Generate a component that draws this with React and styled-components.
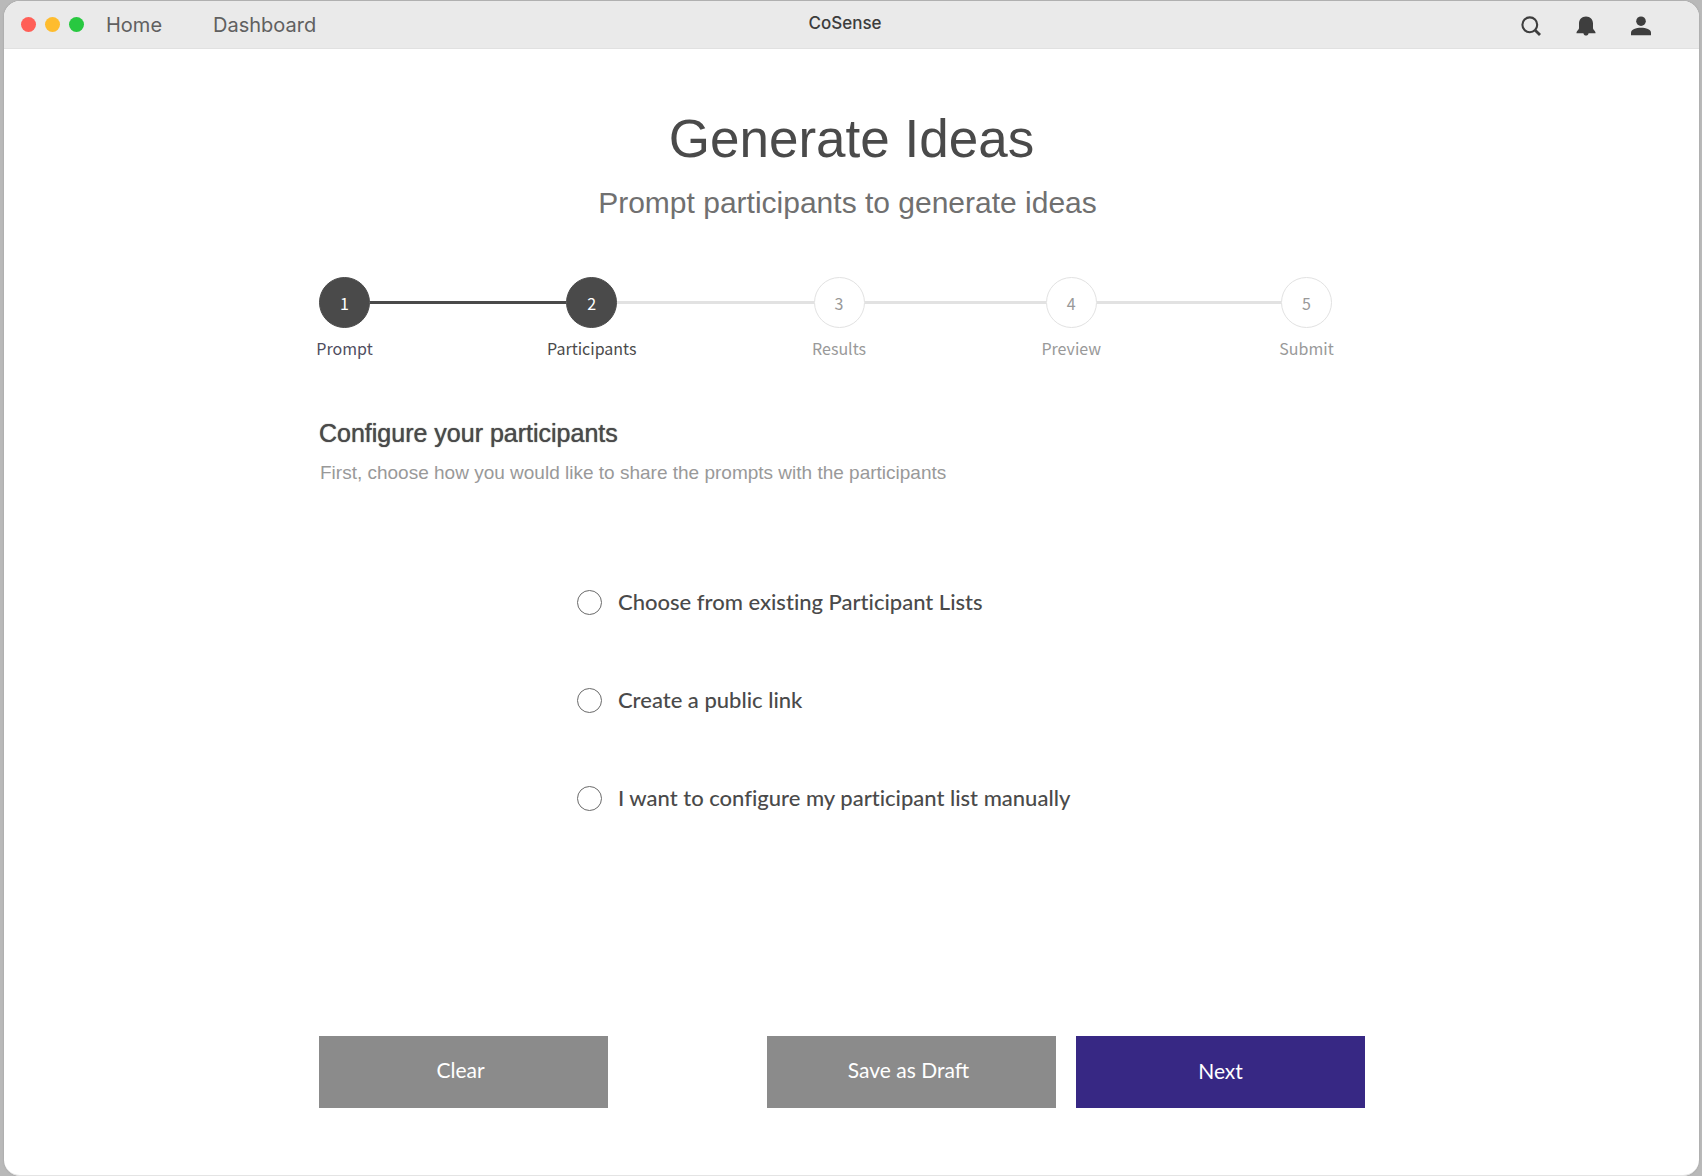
import React, { useState } from "react";
import styled, { createGlobalStyle } from "styled-components";

const sans = '"Liberation Sans", Arial, sans-serif';
const system = 'Inter, "Liberation Sans", sans-serif';
const humanist = '"Noto Sans CJK SC", "Noto Sans", sans-serif';
const geometric = 'Lato, "Open Sans", sans-serif';

const GlobalStyle = createGlobalStyle`
  *, *::before, *::after { box-sizing: border-box; }
  body { margin: 0; background: #b9b9b9; font-family: ${sans}; color: #4a4a4a; }
`;

const Desktop = styled.div`
  display: flex;
  min-height: 100vh;
  padding: 1px 3px 0 4px;
`;

const Window = styled.div`
  flex: 1;
  display: flex;
  flex-direction: column;
  background: #fff;
  border-radius: 16px;
  box-shadow: 0 0 2px #999;
  border-bottom: 1px solid #e4e4e4;
  overflow: hidden;
`;

const TitleBar = styled.header`
  display: grid;
  grid-template-columns: 1fr auto 1fr;
  align-items: center;
  height: 48px;
  padding: 0 30px 0 17px;
  background: #eaeaea;
  border-bottom: 1px solid #e1e1e1;
`;

const BarStart = styled.div`
  display: flex;
  align-items: center;
  gap: 22px;
`;

const Lights = styled.div`
  display: flex;
  gap: 9px;
`;

const Light = styled.span`
  width: 15px;
  height: 15px;
  border-radius: 50%;
  background: ${(p) => p.$color};
`;

const Nav = styled.nav`
  display: flex;
  gap: 51px;
`;

const NavLink = styled.a`
  font: 400 20px/24px ${system};
  color: #606060;
  text-decoration: none;
`;

const AppName = styled.div`
  padding-bottom: 4px;
  font: 500 17px/24px ${system};
  color: #3c3c3c;
`;

const Tools = styled.div`
  display: flex;
  justify-content: flex-end;
  gap: 35px;
  margin-right: 18px;
`;

const ToolButton = styled.button`
  display: flex;
  padding: 3px 0 0;
  border: 0;
  background: none;
  color: #3e3e3e;
  cursor: pointer;
`;

const Main = styled.main`
  flex: 1;
  display: flex;
  flex-direction: column;
  width: 100%;
  max-width: 1065px;
  margin: 0 auto;
  padding: 56px 0 67px;
`;

const PageTitle = styled.h1`
  margin: 0;
  font: 400 53px/68px ${sans};
  text-align: center;
`;

const PageSubtitle = styled.p`
  margin: 12px 8px 0 0;
  font: 400 30px/36px ${sans};
  color: #707070;
  text-align: center;
`;

const Steps = styled.ol`
  display: flex;
  margin: 56px 52px 0 0;
  padding: 0;
  list-style: none;
`;

const Step = styled.li`
  display: flex;
  flex-direction: column;
  align-items: center;
  width: 51px;
  color: ${(p) => (p.$done ? "#4f4d60" : p.$reached ? "#4a4a4a" : "#999")};
  font: 400 16px/24px ${humanist};
`;

const StepNumber = styled.span`
  display: flex;
  align-items: center;
  justify-content: center;
  width: 51px;
  height: 51px;
  border: 1px solid ${(p) => (p.$reached ? "#4a4a4a" : "#e2e2e2")};
  border-radius: 50%;
  background: ${(p) => (p.$reached ? "#4a4a4a" : "#fff")};
  color: ${(p) => (p.$reached ? "#fff" : "#999")};
`;

const StepLabel = styled.span`
  margin-top: 8px;
  white-space: nowrap;
`;

const Connector = styled.li`
  flex: ${(p) => p.$share};
  height: 3px;
  margin-top: 24px;
  background: ${(p) => (p.$reached ? "#4a4a4a" : "#e2e2e2")};
`;

const Form = styled.form`
  flex: 1;
  display: flex;
  flex-direction: column;
  padding-top: 58px;
`;

const SectionTitle = styled.h2`
  margin: 0;
  font: 400 25px/30px ${sans};
  text-shadow: 0 0 1px currentColor;
`;

const SectionHint = styled.p`
  margin: 13px 0 0 1px;
  font: 400 19px/24px ${sans};
  color: #999;
`;

const Options = styled.fieldset`
  display: flex;
  flex-direction: column;
  gap: 68px;
  margin: 102px 0 0 258px;
  padding: 0;
  border: 0;
`;

const Option = styled.label`
  display: flex;
  align-items: center;
  gap: 16px;
  font: 500 22px/30px ${geometric};
  font-variant-ligatures: none;
  cursor: pointer;
`;

const Radio = styled.input`
  appearance: none;
  flex: none;
  width: 25px;
  height: 25px;
  margin: 0;
  border: 1px solid #6a6a6a;
  border-radius: 50%;
  &:checked { border: 8px solid #372884; }
`;

const Actions = styled.div`
  display: flex;
  gap: 20px;
  margin-top: auto;
  padding-right: 19px;
`;

const Action = styled.button`
  width: 289px;
  height: 72px;
  margin-right: ${(p) => (p.$apart ? "auto" : "0")};
  padding: ${(p) => (p.$primary ? "0 0 2px" : "0 6px 4px 0")};
  border: 0;
  background: ${(p) => (p.$primary ? "#372884" : "#8b8b8b")};
  color: #fff;
  font: 400 21px/30px ${geometric};
  cursor: pointer;
`;

const SearchIcon = () => (
  <svg width="20" height="20" viewBox="0 0 20 20" fill="none" stroke="currentColor" aria-hidden="true">
    <circle cx="8.8" cy="8.8" r="7.4" strokeWidth="2.1" />
    <path d="M14.2 14.2 19 19" strokeWidth="2.8" />
  </svg>
);

const BellIcon = () => (
  <svg width="20" height="20" viewBox="0 0 20 20" fill="currentColor" aria-hidden="true">
    <path d="M10 0.5C5.7 0.5 3 3.4 3 7.5V12.3C3 13.6 0.8 15 0.5 16.4V17.2H7.4C7.7 18.7 8.7 19.5 10 19.5S12.3 18.7 12.6 17.2H19.5V16.4C19.2 15 17 13.6 17 12.3V7.5C17 3.4 14.3 0.5 10 0.5Z" />
  </svg>
);

const PersonIcon = () => (
  <svg width="20" height="20" viewBox="0 0 20 20" fill="currentColor" aria-hidden="true">
    <circle cx="10" cy="5.2" r="4.8" />
    <path d="M0 19.2V16.6C0 13.4 5 11.8 10 11.8S20 13.4 20 16.6V19.2Z" />
  </svg>
);

const steps = ["Prompt", "Participants", "Results", "Preview", "Submit"];
const connectorShares = [196, 196, 181, 184];
const currentStep = 1;

const options = [
  { id: "existing", label: "Choose from existing Participant Lists" },
  { id: "link", label: "Create a public link" },
  { id: "manual", label: "I want to configure my participant list manually" },
];

export default function App() {
  const [choice, setChoice] = useState(null);

  return (
    <Desktop>
      <GlobalStyle />
      <Window>
        <TitleBar>
          <BarStart>
            <Lights>
              <Light $color="#ff5f57" />
              <Light $color="#febc2e" />
              <Light $color="#28c840" />
            </Lights>
            <Nav>
              <NavLink href="#home">Home</NavLink>
              <NavLink href="#dashboard">Dashboard</NavLink>
            </Nav>
          </BarStart>
          <AppName>CoSense</AppName>
          <Tools>
            <ToolButton type="button" aria-label="Search"><SearchIcon /></ToolButton>
            <ToolButton type="button" aria-label="Notifications"><BellIcon /></ToolButton>
            <ToolButton type="button" aria-label="Account"><PersonIcon /></ToolButton>
          </Tools>
        </TitleBar>
        <Main>
          <PageTitle>Generate Ideas</PageTitle>
          <PageSubtitle>Prompt participants to generate ideas</PageSubtitle>
          <Steps>
            {steps.map((name, i) => (
              <React.Fragment key={name}>
                {i > 0 && (
                  <Connector
                    aria-hidden="true"
                    $share={connectorShares[i - 1]}
                    $reached={i <= currentStep}
                  />
                )}
                <Step
                  $done={i < currentStep}
                  $reached={i <= currentStep}
                  aria-current={i === currentStep ? "step" : undefined}
                >
                  <StepNumber $reached={i <= currentStep}>{i + 1}</StepNumber>
                  <StepLabel>{name}</StepLabel>
                </Step>
              </React.Fragment>
            ))}
          </Steps>
          <Form onSubmit={(e) => e.preventDefault()}>
            <SectionTitle>Configure your participants</SectionTitle>
            <SectionHint>
              First, choose how you would like to share the prompts with the participants
            </SectionHint>
            <Options aria-label="Sharing method">
              {options.map(({ id, label }) => (
                <Option key={id} htmlFor={id}>
                  <Radio
                    type="radio"
                    id={id}
                    name="sharing"
                    checked={choice === id}
                    onChange={() => setChoice(id)}
                  />
                  {label}
                </Option>
              ))}
            </Options>
            <Actions>
              <Action type="button" $apart onClick={() => setChoice(null)}>Clear</Action>
              <Action type="button">Save as Draft</Action>
              <Action type="submit" $primary>Next</Action>
            </Actions>
          </Form>
        </Main>
      </Window>
    </Desktop>
  );
}
